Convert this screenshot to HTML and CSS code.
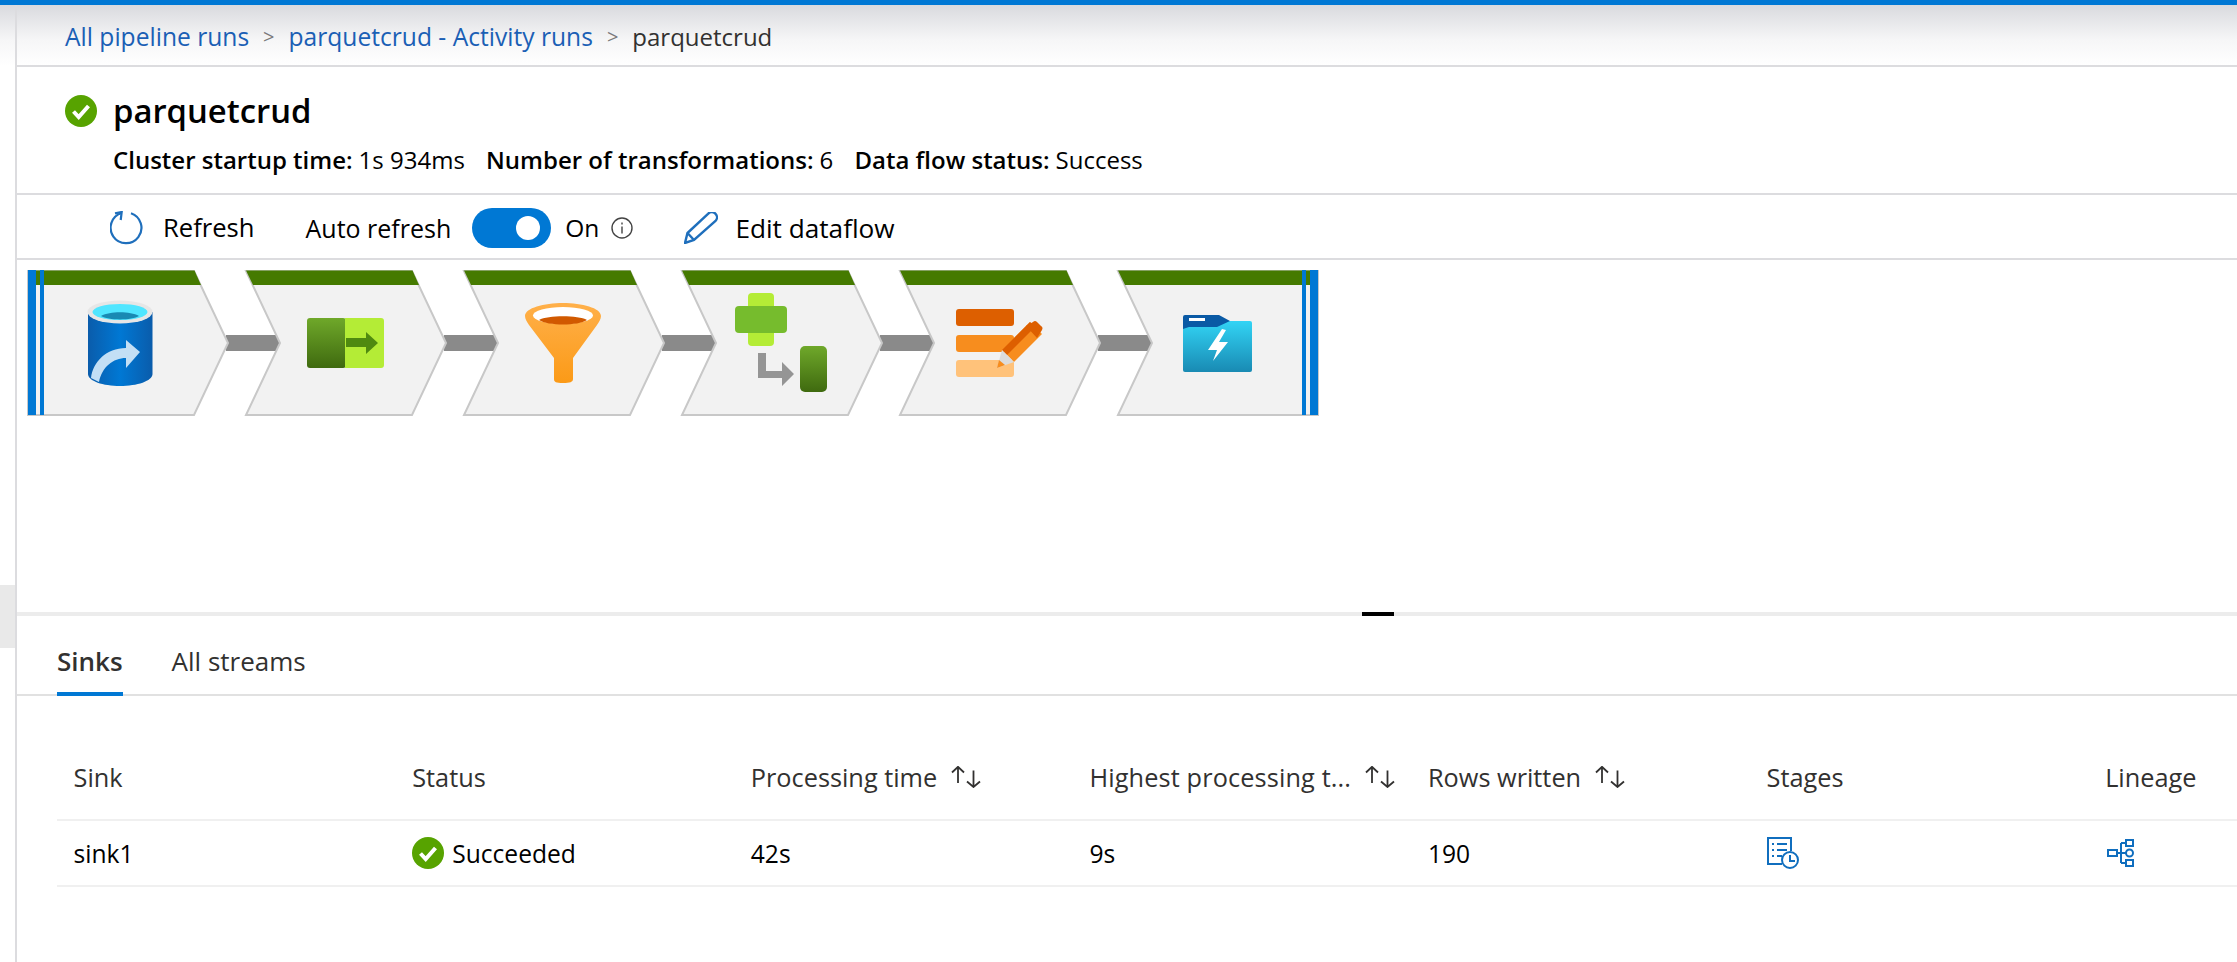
FILE: index.html
```html
<!DOCTYPE html>
<html lang="en">

<head>
    <meta charset="UTF-8">
    <title>parquetcrud</title>
    <link rel="stylesheet" href="styles.css">
</head>

<body>
    <div class="topline"></div>
    <div class="shell">
        <aside class="rail">
            <div class="rail-block"></div>
        </aside>
        <main class="main">
            <nav class="crumbs">
                <a>All pipeline runs</a>
                <span class="sep">&gt;</span>
                <a>parquetcrud - Activity runs</a>
                <span class="sep">&gt;</span>
                <span class="crumb-c">parquetcrud</span>
            </nav>

            <header class="head">
                <div class="title-row">
                    <svg class="check" viewBox="0 0 32 32">
                        <circle cx="16" cy="16" r="16" fill="#57a300" />
                        <path d="M8.5 16.5l5.2 5.5 9.8-11" fill="none" stroke="#fff" stroke-width="4" />
                    </svg>
                    <h1 class="title">parquetcrud</h1>
                </div>
                <div class="facts">
                    <b>Cluster startup time:</b><span>1s 934ms</span>
                    <b>Number of transformations:</b><span>6</span>
                    <b>Data flow status:</b><span>Success</span>
                </div>
            </header>

            <div class="toolbar">
                <svg class="icon-refresh" viewBox="0 0 34 34">
                    <path d="M21 2.2A15.4 15.4 0 1 1 11.700 2" fill="none" stroke="#1f6fbc" stroke-width="2.2" />
                    <path d="M5 2.300L11.700 1 10.700 9" fill="none" stroke="#1f6fbc" stroke-width="2.2" />
                </svg>
                <span class="tool-refresh">Refresh</span>
                <span class="auto">Auto refresh</span>
                <span class="toggle"><span class="knob"></span></span>
                <span class="on">On</span>
                <svg class="icon-info" viewBox="0 0 22 22">
                    <circle cx="11" cy="11" r="10" fill="none" stroke="#444" stroke-width="1.4" />
                    <path d="M11 9.500v7M11 5.500v2" stroke="#444" stroke-width="1.4" />
                </svg>
                <svg class="icon-edit" viewBox="0 0 34 32">
                    <path d="M1 31L3.500 21 24 1.800a4.500 4.500 0 0 1 7.500 7.200L10 28Z" fill="none" stroke="#1f6fbc" stroke-width="2.400" />
                    <path d="M3.500 21L10 28" fill="none" stroke="#1f6fbc" stroke-width="2.400" />
                </svg>
                <span class="tool-edit">Edit dataflow</span>
            </div>

            <section class="flow">
                <svg class="graph" width="1313" height="165" viewBox="17 260 1313 165">
                    <defs>
                        <linearGradient id="dbBody" x1="0" x2="1" y1="0" y2="0">
                            <stop offset="0" stop-color="#0a5cab" />
                            <stop offset="0.5" stop-color="#0078d4" />
                            <stop offset="1" stop-color="#0a5cab" />
                        </linearGradient>
                        <linearGradient id="greenDark" x1="0" x2="0" y1="0" y2="1">
                            <stop offset="0" stop-color="#6fa82a" />
                            <stop offset="1" stop-color="#3f6a0f" />
                        </linearGradient>
                        <linearGradient id="funnel" x1="0" x2="0" y1="0" y2="1">
                            <stop offset="0" stop-color="#ffb04a" />
                            <stop offset="1" stop-color="#fb9a17" />
                        </linearGradient>
                        <linearGradient id="folder" x1="0" x2="0" y1="0" y2="1">
                            <stop offset="0" stop-color="#32d4f5" />
                            <stop offset="1" stop-color="#198ab3" />
                        </linearGradient>
                    </defs>

                    <!-- connectors -->
                    <g fill="#8a8a8a">
                        <rect x="226" y="335" width="54" height="16" />
                        <rect x="444" y="335" width="54" height="16" />
                        <rect x="662" y="335" width="54" height="16" />
                        <rect x="880" y="335" width="54" height="16" />
                        <rect x="1098" y="335" width="54" height="16" />
                    </g>

                    <!-- nodes -->
                    <g fill="#f2f2f2" stroke="#c8c8c8" stroke-width="2">
                        <path d="M28 271H194L228 343 194 415H28Z" />
                        <path d="M246 271H412L446 343 412 415H246L280 343Z" />
                        <path d="M464 271H630L664 343 630 415H464L498 343Z" />
                        <path d="M682 271H848L882 343 848 415H682L716 343Z" />
                        <path d="M900 271H1066L1100 343 1066 415H900L934 343Z" />
                        <path d="M1118 271H1318V415H1118L1152 343Z" />
                    </g>
                    <g fill="#457a00">
                        <path d="M28 270.500H194.500L201 285H28Z" />
                        <path d="M246 270.500H412.500L419 285H253Z" />
                        <path d="M464 270.500H630.500L637 285H471Z" />
                        <path d="M682 270.500H848.500L855 285H689Z" />
                        <path d="M900 270.500H1066.500L1073 285H907Z" />
                        <path d="M1118 270.500H1318V285H1125Z" />
                    </g>
                    <g fill="#0078d4">
                        <rect x="28" y="270" width="8" height="145" />
                        <rect x="40" y="270" width="4" height="145" />
                        <rect x="1302" y="270" width="4" height="145" />
                        <rect x="1310" y="270" width="8" height="145" />
                    </g>

                    <!-- source: database -->
                    <path d="M88 312V374C88 381 103 386 120 386S152.500 381 152.500 374V312Z" fill="url(#dbBody)" />
                    <ellipse cx="120" cy="312" rx="32.500" ry="11.500" fill="#e6e6e6" />
                    <ellipse cx="120" cy="312" rx="27.500" ry="8" fill="#50e6ff" />
                    <path d="M101 316C110 311 130 311 139 316 132 320.500 108 320.500 101 316Z" fill="#198ab3" />
                    <path d="M91 378C93 362 106 348 126 348V340L140 352 126 368V358C113 358 102 367 99 382Z" fill="#c3dff5" />

                    <!-- select -->
                    <rect x="307" y="318" width="39" height="50" rx="3" fill="url(#greenDark)" />
                    <path d="M345 318H381a3 3 0 0 1 3 3V365a3 3 0 0 1-3 3H345Z" fill="#b4ec36" />
                    <path d="M346 338H366V332L378 343 366 354V347H346Z" fill="#4f8a10" />

                    <!-- filter -->
                    <path d="M525 316C525 308 544 303 563 303S601 308 601 316C601 319 599 322 597 325L573 358V379C573 382 570 383 563 383S554 382 554 379V358L529 325C527 322 525 319 525 316Z" fill="url(#funnel)" />
                    <ellipse cx="563" cy="315.500" rx="30" ry="8.500" fill="#fff" />
                    <path d="M539 320C548 315 578 315 587 320 578 326 548 326 539 320Z" fill="#d15900" />

                    <!-- aggregate and sink branch -->
                    <rect x="748" y="293" width="26" height="53" rx="4" fill="#b4ec36" />
                    <rect x="735" y="306" width="52" height="27" rx="4" fill="#76bc2d" />
                    <path d="M758 353H766V371H782V362L794 374 782 386V378H758Z" fill="#959595" />
                    <rect x="800" y="346" width="27" height="46" rx="5" fill="url(#greenDark)" />

                    <!-- derive -->
                    <rect x="956" y="309" width="58" height="17" rx="3" fill="#dd5f00" />
                    <rect x="956" y="335" width="58" height="17" rx="3" fill="#f78d1e" />
                    <rect x="956" y="360" width="58" height="17" rx="3" fill="#ffc27a" />
                    <path d="M1002 350L1030 322 1042 334 1014 362Z" fill="#f78d1e" />
                    <path d="M1002 350L1030 322 1035 327 1007 355Z" fill="#dd5f00" />
                    <path d="M1026 326L1033 322a3 3 0 0 1 4 0L1041 326a3 3 0 0 1 1 4L1037 338Z" fill="#dd5f00" />
                    <path d="M1002 350L1014 362 997 368Z" fill="#dcdcdc" />
                    <path d="M999 360L1005 365 997 368Z" fill="#f78d1e" />

                    <!-- sink: folder -->
                    <path d="M1183 321V370a2 2 0 0 0 2 2H1250a2 2 0 0 0 2-2V323a2 2 0 0 0-2-2Z" fill="url(#folder)" />
                    <path d="M1183 329V317a2 2 0 0 1 2-2H1216L1219 315 1230 321 1217 327H1189Z" fill="#0a5aa5" />
                    <rect x="1189" y="318" width="16" height="3" fill="#fff" />
                    <path d="M1222 329L1208 350H1217L1213 361 1228 342H1219L1226 330Z" fill="#fff" />
                </svg>
                <span class="handle"></span>
            </section>

            <div class="tabs">
                <span class="tab tab-on">Sinks</span>
                <span class="tab">All streams</span>
            </div>

            <table class="runs">
                <thead>
                    <tr>
                        <th>Sink</th>
                        <th>Status</th>
                        <th>
                            <span class="sortable">Processing time
                                <svg class="sort" viewBox="0 0 30 22">
                                    <path d="M7 17V0.800M1 6.500L7 0.800 13 6.500M22.500 4.500V21M16 15.500L22.500 21 29 15.500" />
                                </svg>
                            </span>
                        </th>
                        <th>
                            <span class="sortable long">Highest processing t...
                                <svg class="sort" viewBox="0 0 30 22">
                                    <path d="M7 17V0.800M1 6.500L7 0.800 13 6.500M22.500 4.500V21M16 15.500L22.500 21 29 15.500" />
                                </svg>
                            </span>
                        </th>
                        <th>
                            <span class="sortable">Rows written
                                <svg class="sort" viewBox="0 0 30 22">
                                    <path d="M7 17V0.800M1 6.500L7 0.800 13 6.500M22.500 4.500V21M16 15.500L22.500 21 29 15.500" />
                                </svg>
                            </span>
                        </th>
                        <th>Stages</th>
                        <th>Lineage</th>
                    </tr>
                </thead>
                <tbody>
                    <tr>
                        <td>sink1</td>
                        <td>
                            <span class="status">
                                <svg class="check" viewBox="0 0 32 32">
                                    <circle cx="16" cy="16" r="16" fill="#57a300" />
                                    <path d="M8.5 16.5l5.2 5.500 9.800-11" fill="none" stroke="#fff" stroke-width="4" />
                                </svg>
                                Succeeded
                            </span>
                        </td>
                        <td>42s</td>
                        <td>9s</td>
                        <td>190</td>
                        <td>
                            <svg class="icon-stages" viewBox="0 0 32 32">
                                <path d="M15 27H1V1H24V14" fill="none" stroke="#106ebe" stroke-width="2" />
                                <path d="M5 7H7M10 7H20M5 13H7M10 13H20M5 19H7M10 19H15" fill="none" stroke="#106ebe" stroke-width="2" />
                                <circle cx="23" cy="23" r="8" fill="#fff" stroke="#106ebe" stroke-width="2" />
                                <path d="M23 18V24H28" fill="none" stroke="#106ebe" stroke-width="2" />
                            </svg>
                        </td>
                        <td>
                            <svg class="icon-lineage" viewBox="0 0 28 28">
                                <g fill="none" stroke="#106ebe" stroke-width="2">
                                    <rect x="1" y="11" width="9" height="6" />
                                    <rect x="19" y="1" width="7" height="6" />
                                    <rect x="19" y="21" width="7" height="6" />
                                    <circle cx="22.500" cy="14" r="3.500" />
                                    <path d="M10 14H19M14 4H19M14 24H19M14 4V24" />
                                </g>
                            </svg>
                        </td>
                    </tr>
                </tbody>
            </table>
        </main>
    </div>
</body>

</html>
```

FILE: styles.css
```css
* {
    box-sizing: border-box;
}

html,
body {
    margin: 0;
    height: 100%;
    overflow: hidden;
}

body {
    background: linear-gradient(#d9dade 5px, #f6f6f7 40px, #fff 66px) no-repeat;
    color: #000;
    font-family: "Open Sans", "Noto Sans", sans-serif;
    font-size: 24.5px;
}

.topline {
    height: 5px;
    background-color: #0078d4;
}

.shell {
    display: flex;
    height: 957px;
}

.rail {
    width: 15px;
    flex: none;
    padding-top: 580px;
}

.rail-block {
    height: 63px;
    background-color: #e9e9e9;
}

.main {
    flex: 1;
    min-width: 0;
    border-left: 2px solid #dcdcdf;
    overflow: hidden;
}

/* breadcrumb */
.crumbs {
    height: 62px;
    padding: 2px 0 0 48px;
    display: flex;
    align-items: center;
    border-bottom: 2px solid #dcdcdf;
    font-size: 24.6px;
    white-space: nowrap;
}

.crumbs a {
    color: #1b5fb5;
}

.crumb-c {
    color: #323130;
    font-size: 24px;
}

.sep {
    color: #7a7a7a;
    font-size: 20px;
    margin: 0 14px;
}

/* title block */
.head {
    height: 128px;
    border-bottom: 2px solid #dcdcdf;
    padding: 25px 0 0 48px;
}

.title-row {
    display: flex;
    align-items: center;
    gap: 16px;
}

.check {
    width: 32px;
    height: 32px;
    flex: none;
}

.title {
    margin: 0;
    font-size: 32.8px;
    font-weight: 600;
    line-height: 38px;
}

.facts {
    margin: 14px 0 0 48px;
    font-size: 24px;
    line-height: 32px;
    white-space: nowrap;
}

.facts b {
    font-weight: 600;
}

.facts span {
    margin-left: 6px;
    margin-right: 15px;
}

/* toolbar */
.toolbar {
    height: 65px;
    border-bottom: 2px solid #dcdcdf;
    padding: 2px 0 0 93px;
    display: flex;
    align-items: center;
    white-space: nowrap;
}

.icon-refresh {
    width: 34px;
    height: 34px;
    flex: none;
}

.tool-refresh {
    margin-left: 19px;
    font-size: 25.6px;
}

.auto {
    margin-left: 51px;
    font-size: 25px;
    font-weight: 500;
}

.toggle {
    width: 79px;
    height: 40px;
    margin-left: 21px;
    border-radius: 20px;
    background-color: #0078d4;
    display: flex;
    align-items: center;
    justify-content: flex-end;
    padding-right: 11px;
}

.knob {
    width: 24px;
    height: 24px;
    border-radius: 50%;
    background-color: #fff;
}

.on {
    margin-left: 14px;
}

.icon-info {
    width: 22px;
    height: 22px;
    margin-left: 12px;
}

.icon-edit {
    width: 34px;
    height: 32px;
    margin-left: 51px;
}

.tool-edit {
    margin-left: 17px;
    font-size: 26.2px;
}

/* pipeline diagram */
.flow {
    position: relative;
    height: 356px;
    border-bottom: 4px solid #ececec;
}

.graph {
    display: block;
}

.handle {
    position: absolute;
    left: 1345px;
    bottom: -4px;
    width: 32px;
    height: 4px;
    background-color: #000;
}

/* tabs */
.tabs {
    height: 80px;
    padding: 12px 0 0 40px;
    display: flex;
    align-items: flex-start;
    gap: 49px;
    border-bottom: 2px solid #e1e1e1;
}

.tab {
    height: 68px;
    color: #323130;
    font-size: 26px;
    line-height: 66px;
}

.tab-on {
    font-weight: 600;
    border-bottom: 4px solid #0078d4;
}

/* table */
.runs {
    margin: 41px 0 0 40px;
    border-spacing: 0;
    table-layout: fixed;
    width: 2370px;
}

.runs th,
.runs td {
    width: 338.6px;
    padding: 0 0 0 16.6px;
    text-align: left;
    white-space: nowrap;
    border-bottom: 2px solid #f0f0f0;
}

.runs th {
    height: 84px;
    padding-bottom: 3px;
    font-size: 25.3px;
    font-weight: 500;
    color: #323130;
}

.runs td {
    height: 66px;
    font-size: 24.6px;
}

.runs td svg {
    display: block;
}

.sortable {
    display: inline-flex;
    align-items: center;
    gap: 14px;
}

.long {
    letter-spacing: 0.13px;
}

.sort {
    width: 30px;
    height: 22px;
    fill: none;
    stroke: #323130;
    stroke-width: 1.8;
}

.status {
    display: flex;
    align-items: center;
    gap: 8px;
}

.icon-stages {
    width: 32px;
    height: 32px;
}

.icon-lineage {
    width: 28px;
    height: 28px;
    margin-left: 2px;
}
```
